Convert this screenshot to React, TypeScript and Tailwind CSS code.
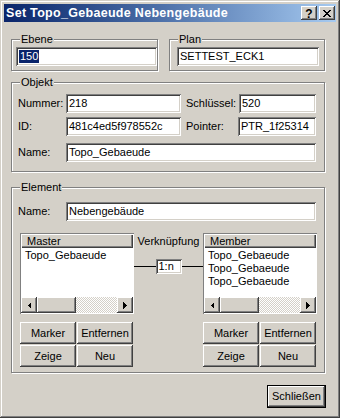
import React from "react";

const raised =
  "shadow-[inset_-1px_-1px_#404040,inset_1px_1px_#ffffff,inset_-2px_-2px_#808080,inset_2px_2px_#d4d0c8]";
const sunken =
  "shadow-[inset_1px_1px_#808080,inset_-1px_-1px_#ffffff,inset_2px_2px_#404040,inset_-2px_-2px_#d4d0c8]";
const etched =
  "border border-[#808080] shadow-[inset_1px_1px_#ffffff,1px_1px_#ffffff]";

function Edit({
  className,
  children,
}: {
  className: string;
  children?: React.ReactNode;
}) {
  return (
    <div
      className={`${sunken} bg-white h-[19px] flex items-center pl-[3px] leading-[13px] whitespace-nowrap overflow-hidden ${className}`}
    >
      {children}
    </div>
  );
}

function Group({
  label,
  className,
  labelLeft,
  children,
}: {
  label: string;
  className: string;
  labelLeft: string;
  children: React.ReactNode;
}) {
  return (
    <div className={`relative ${etched} ${className}`}>
      <span
        className={`absolute top-[-7px] ${labelLeft} bg-[#d4d0c8] px-[1px] leading-[13px]`}
      >
        {label}
      </span>
      {children}
    </div>
  );
}

function Btn({
  className,
  children,
}: {
  className: string;
  children: React.ReactNode;
}) {
  return (
    <div
      className={`${raised} bg-[#d4d0c8] flex items-center justify-center leading-[13px] ${className}`}
    >
      {children}
    </div>
  );
}

function Arrow({ dir }: { dir: "left" | "right" }) {
  return (
    <div
      className={`${raised} bg-[#d4d0c8] w-[16px] h-[16px] flex items-center justify-center`}
    >
      <svg width="4" height="7" viewBox="0 0 4 7" shapeRendering="crispEdges">
        {dir === "left" ? (
          <polygon points="4,0 4,7 0.5,3.5" fill="#000" />
        ) : (
          <polygon points="0,0 0,7 3.5,3.5" fill="#000" />
        )}
      </svg>
    </div>
  );
}

function ListView({ header, items }: { header: string; items: string[] }) {
  return (
    <div className="w-[114px] h-[81px] bg-white flex flex-col shadow-[inset_1px_1px_#808080,inset_-1px_-1px_#ffffff] p-[1px]">
      <div className="h-[14px] bg-[#d4d0c8] shadow-[inset_1px_1px_#ffffff,inset_-1px_-1px_#404040,inset_-2px_-2px_#808080] flex items-center pl-[6px] leading-[13px]">
        {header}
      </div>
      <div className="flex-1 pt-[1px]">
        {items.map((t, i) => (
          <div key={i} className="h-[13px] leading-[13px] pl-[4px]">
            {t}
          </div>
        ))}
      </div>
      <div className="h-[16px] flex">
        <Arrow dir="left" />
        <div className={`${raised} bg-[#d4d0c8] w-[39px] h-[16px]`} />
        <div className="flex-1 h-[16px] bg-[image:repeating-conic-gradient(#d4d0c8_0%_25%,#ffffff_0%_50%)] bg-[length:2px_2px]" />
        <Arrow dir="right" />
      </div>
    </div>
  );
}

function ButtonPair() {
  return (
    <div className="grid grid-cols-[56px_56px] gap-x-[1px] gap-y-[1px] mt-[8px]">
      <Btn className="h-[22px]">Marker</Btn>
      <Btn className="h-[22px]">Entfernen</Btn>
      <Btn className="h-[22px]">Zeige</Btn>
      <Btn className="h-[22px]">Neu</Btn>
    </div>
  );
}

export default function App() {
  return (
    <div className="w-[340px] h-[418px] bg-[#d4d0c8] p-[4px] shadow-[inset_-1px_-1px_#404040,inset_1px_1px_#d4d0c8,inset_-2px_-2px_#808080,inset_2px_2px_#ffffff] font-[Liberation_Sans,Arial,sans-serif] text-[11px] text-black leading-[13px] flex flex-col">
      {/* Title bar */}
      <div className="h-[18px] flex items-center bg-linear-to-r from-[#0a246a] to-[#a6caf0] pl-[2px] pr-[1px]">
        <div className="text-white font-bold text-[12.5px] leading-[14px] whitespace-nowrap tracking-[0.3px]">
          Set Topo_Gebaeude Nebengebäude
        </div>
        <div className="ml-auto flex gap-[2px]">
          <div
            className={`${raised} bg-[#d4d0c8] w-[16px] h-[14px] flex items-center justify-center font-bold text-[12px] leading-[12px] pt-[1px]`}
          >
            ?
          </div>
          <div
            className={`${raised} bg-[#d4d0c8] w-[16px] h-[14px] flex items-center justify-center`}
          >
            <svg width="8" height="7" viewBox="0 0 8 7" shapeRendering="crispEdges">
              <path
                d="M0 0h2v1h-2zM6 0h2v1h-2zM1 1h2v1h-2zM5 1h2v1h-2zM2 2h4v1h-4zM3 3h2v1h-2zM2 4h4v1h-4zM1 5h2v1h-2zM5 5h2v1h-2zM0 6h2v1h-2zM6 6h2v1h-2z"
                fill="#000"
              />
            </svg>
          </div>
        </div>
      </div>

      {/* Body */}
      <div className="w-[322px] pl-[7px] flex flex-col">
        {/* Ebene / Plan */}
        <div className="flex mt-[17px]">
          <Group label="Ebene" className="w-[147px] h-[32px] pt-[7px] pl-[4px]" labelLeft="left-[8px]">
            <Edit className="w-[141px] pl-[1px]">
              <span className="bg-[#0a246a] text-white px-[1px]">150</span>
            </Edit>
          </Group>
          <Group label="Plan" className="w-[156px] h-[32px] ml-[11px] pt-[7px] pl-[7px]" labelLeft="left-[8px]">
            <Edit className="w-[142px]">SETTEST_ECK1</Edit>
          </Group>
        </div>

        {/* Objekt */}
        <Group label="Objekt" className="w-[314px] h-[90px] mt-[11px] pt-[11px] pl-[6px]" labelLeft="left-[8px]">
          <div className="flex items-center h-[19px]">
            <div className="w-[48px]">Nummer:</div>
            <Edit className="w-[115px]">218</Edit>
            <div className="w-[5px]" />
            <div className="w-[53px]">Schlüssel:</div>
            <Edit className="w-[77px]">520</Edit>
          </div>
          <div className="flex items-center h-[19px] mt-[4px]">
            <div className="w-[48px]">ID:</div>
            <Edit className="w-[115px]">481c4ed5f978552c</Edit>
            <div className="w-[5px]" />
            <div className="w-[52px]">Pointer:</div>
            <Edit className="w-[78px]">PTR_1f25314</Edit>
          </div>
          <div className="flex items-center h-[19px] mt-[7px]">
            <div className="w-[48px]">Name:</div>
            <Edit className="w-[250px]">Topo_Gebaeude</Edit>
          </div>
        </Group>

        {/* Element */}
        <Group label="Element" className="w-[314px] h-[186px] mt-[15px] pt-[14px] pl-[6px]" labelLeft="left-[8px]">
          <div className="flex items-center h-[19px]">
            <div className="w-[48px]">Name:</div>
            <Edit className="w-[250px]">Nebengebäude</Edit>
          </div>
          <div className="flex mt-[12px] ml-[2px]">
            <div className="flex flex-col">
              <ListView header="Master" items={["Topo_Gebaeude"]} />
              <ButtonPair />
            </div>
            <div className="w-[69px] flex flex-col">
              <div className="text-center pt-[2px] leading-[13px]">Verknüpfung</div>
              <div className="flex items-center mt-[11px]">
                <div className="flex-1 h-[1px] bg-black" />
                <Edit className="w-[26px] h-[15px]! pl-[2px]">1:n</Edit>
                <div className="flex-1 h-[1px] bg-black" />
              </div>
            </div>
            <div className="flex flex-col">
              <ListView header="Member" items={["Topo_Gebaeude", "Topo_Gebaeude", "Topo_Gebaeude"]} />
              <ButtonPair />
            </div>
          </div>
        </Group>

        {/* Schließen */}
        <div className="self-end mt-[12px] w-[59px] h-[23px] border border-black">
          <Btn className="w-full h-full">Schließen</Btn>
        </div>
      </div>
    </div>
  );
}
